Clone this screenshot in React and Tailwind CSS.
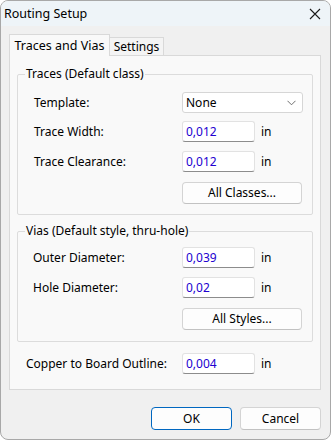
import React from 'react';

const font = { fontFamily: '"Noto Sans", "Open Sans", sans-serif' };

function ValueInput({ value }) {
  return (
    <div className="flex items-center">
      <div className="w-[73px] h-[21px] bg-white border border-[#e2e2e2] border-b-[#8c8c8c] rounded-[3px] pl-[3px] flex items-center text-[#2200d0]">
        {value}
      </div>
      <span className="ml-[6px] text-black">in</span>
    </div>
  );
}

function Row({ label, children, labelWidth = 'w-[148px]', className = '' }) {
  return (
    <div className={`flex items-center h-[21px] ${className}`}>
      <div className={`${labelWidth} shrink-0`}>{label}</div>
      {children}
    </div>
  );
}

function Btn({ children, className = '' }) {
  return (
    <div className={`h-[22px] bg-[#fdfdfd] border border-[#d4d4d4] border-b-[#c2c2c2] rounded-[4px] flex items-center justify-center ${className}`}>
      {children}
    </div>
  );
}

export default function App() {
  return (
    <div className="w-[331px] h-[440px] bg-white text-[12px] leading-[16px] text-black" style={font}>
      <div className="w-[331px] h-[440px] rounded-[8px] border border-[#a8a8a8] bg-[#f0f0f0] overflow-hidden flex flex-col">
        {/* title bar */}
        <div className="h-[25px] shrink-0 bg-[#eef4f8] flex items-center justify-between pl-[3px] pr-[9px]">
          <span className="text-[12.5px]">Routing Setup</span>
          <svg width="12" height="12" viewBox="0 0 12 12" className="text-[#1a1a1a]">
            <path d="M1 1 L11 11 M11 1 L1 11" stroke="currentColor" strokeWidth="1.1" fill="none" />
          </svg>
        </div>

        {/* tabs */}
        <div className="flex items-end pl-[8px] mt-[8px]">
          <div className="w-[101px] h-[22px] bg-[#f9f9f9] border border-b-0 border-[#d9d9d9] relative z-10 mb-[-1px] flex items-start justify-center pt-[3px] text-[12.5px]">
            Traces and Vias
          </div>
          <div className="w-[54px] h-[18px] bg-[#f4f4f4] border border-l-0 border-b-0 border-[#d9d9d9] flex items-start justify-center pt-[1px]">
            Settings
          </div>
        </div>

        {/* panel */}
        <div className="ml-[8px] w-[312px] h-[335px] bg-[#f9f9f9] border border-[#d9d9d9] px-[7px] pt-[10px] flex flex-col">
          <fieldset className="border border-[#dcdcdc] rounded-[2px] pl-[16px] pr-[9px] pb-[10px]">
            <legend className="ml-[-9px] px-[1px] leading-[16px]">Traces (Default class)</legend>
            <Row label="Template:" className="mt-[10px]">
              <div className="w-[121px] h-[21px] bg-white border border-[#d6d6d6] rounded-[3px] flex items-center justify-between pl-[3px] pr-[6px]">
                <span>None</span>
                <svg width="9" height="6" viewBox="0 0 9 6">
                  <path d="M0.5 0.8 L4.5 4.8 L8.5 0.8" stroke="#606060" strokeWidth="0.9" fill="none" />
                </svg>
              </div>
            </Row>
            <Row label="Trace Width:" className="mt-[8px]">
              <ValueInput value="0,012" />
            </Row>
            <Row label="Trace Clearance:" className="mt-[9px]">
              <ValueInput value="0,012" />
            </Row>
            <div className="flex mt-[10px]">
              <div className="w-[148px]" />
              <Btn className="w-[120px]">All Classes...</Btn>
            </div>
          </fieldset>

          <fieldset className="border border-[#dcdcdc] rounded-[2px] pl-[15px] pr-[9px] pb-[11px] mt-[8px]">
            <legend className="ml-[-8px] px-[1px] leading-[16px]">Vias (Default style, thru-hole)</legend>
            <Row label="Outer Diameter:" labelWidth="w-[149px]" className="mt-[8px]">
              <ValueInput value="0,039" />
            </Row>
            <Row label="Hole Diameter:" labelWidth="w-[149px]" className="mt-[9px]">
              <ValueInput value="0,02" />
            </Row>
            <div className="flex mt-[10px]">
              <div className="w-[149px]" />
              <Btn className="w-[120px]">All Styles...</Btn>
            </div>
          </fieldset>

          <Row label="Copper to Board Outline:" labelWidth="w-[156px]" className="ml-[9px] mt-[11px]">
            <ValueInput value="0,004" />
          </Row>
        </div>

        {/* footer buttons */}
        <div className="flex justify-end gap-[8px] pr-[9px] mt-[17px]">
          <div className="w-[81px] h-[23px] bg-[#fdfdfd] border border-[#0067c0] rounded-[4px] flex items-center justify-center">
            OK
          </div>
          <div className="w-[81px] h-[23px] bg-[#fdfdfd] border border-[#d4d4d4] border-b-[#c2c2c2] rounded-[4px] flex items-center justify-center">
            Cancel
          </div>
        </div>
      </div>
    </div>
  );
}
